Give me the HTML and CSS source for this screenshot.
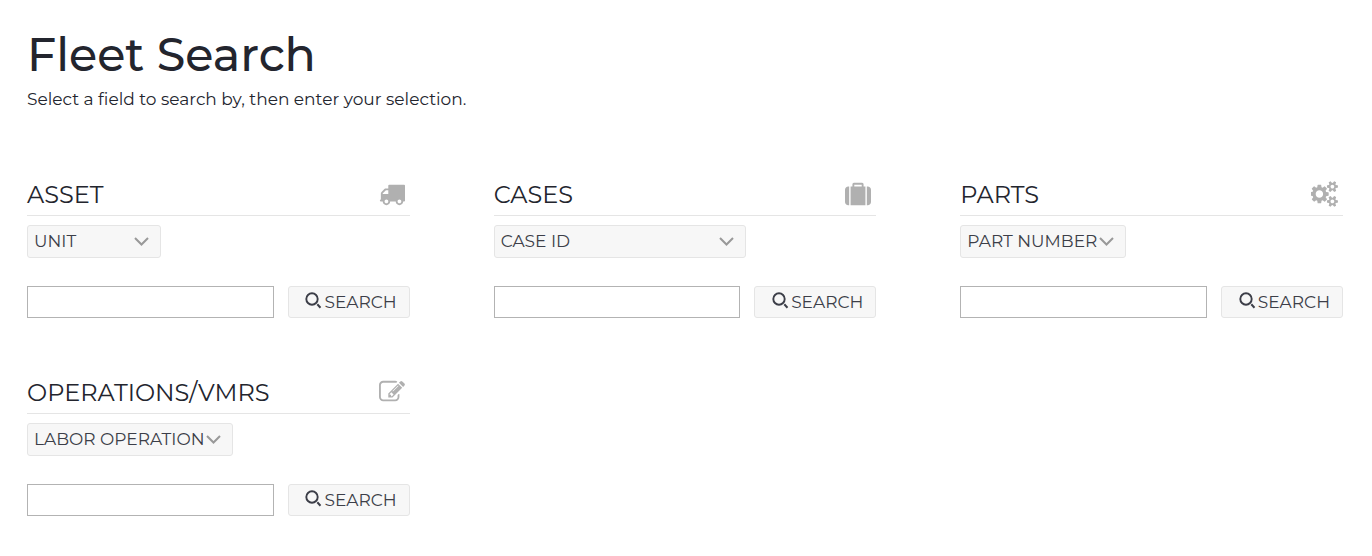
FILE: index.html
```
<!DOCTYPE html>
<html lang="en">
<head>
    <meta charset="UTF-8">
    <meta name="viewport" content="width=device-width, initial-scale=1.0">
    <title>Fleet Search</title>
    <link rel="stylesheet" href="styles.css">
</head>
<body>
    <!-- shared icons -->
    <svg class="sprite" aria-hidden="true">
        <symbol id="icon-search" viewBox="0 0 18 22">
            <circle cx="8" cy="8" r="5.700" fill="none" stroke="currentColor" stroke-width="1.900"/>
            <path d="M13.300 13.300l3.200 3.400" fill="none" stroke="currentColor" stroke-width="2"/>
        </symbol>
        <symbol id="small-cog" viewBox="1088 1024 768 768">
            <path d="M1600 1408q0-52-38-90t-90-38-90 38-38 90q0 53 37.500 90.500t90.500 37.500 90.500-37.500 37.500-90.500zm256-70v140q0 16-149 31-12 27-30 52 51 113 51 138 0 4-4 7-122 71-124 71-8 0-46-47t-52-68q-20 2-30 2t-30-2q-14 21-52 68t-46 47q-2 0-124-71-4-3-4-7 0-25 51-138-18-25-30-52-149-15-149-31v-140q0-16 149-31 13-29 30-52-51-113-51-138 0-4 4-7 4-2 35-20t59-34 30-16q8 0 46 46.500t52 67.500q20-2 30-2t30 2q51-71 92-112l6-2q4 0 124 70 4 3 4 7 0 25-51 138 17 23 30 52 149 15 149 31z"/>
        </symbol>
    </svg>

    <main class="page">
        <header class="page-header">
            <h1>Fleet Search</h1>
            <p>Select a field to search by, then enter your selection.</p>
        </header>

        <div class="search-grid">
            <form class="search-box">
                <div class="box-title">
                    <h2 id="asset-title">ASSET</h2>
                    <svg class="box-icon" viewBox="0 0 1792 1792" aria-hidden="true"><path d="M640 1408q0-52-38-90t-90-38-90 38-38 90 38 90 90 38 90-38 38-90zm-384-512h384v-256h-158q-13 0-22 9l-195 195q-9 9-9 22v30zm1280 512q0-52-38-90t-90-38-90 38-38 90 38 90 90 38 90-38 38-90zm256-1088v1024q0 15-4 26.500t-13.500 18.500-16.500 11.500-23.500 6-22.500 2-25.500 0-22.500-.5q0 106-75 181t-181 75-181-75-75-181h-384q0 106-75 181t-181 75-181-75-75-181h-64q-3 0-22.500.5t-25.500 0-22.500-2-23.500-6-16.500-11.500-13.500-18.500-4-26.500q0-26 19-45t45-19v-320q0-8-.5-35t0-38 2.500-34.500 6.500-37 14-30.500 22.500-30l198-198q19-19 50.500-32t58.500-13h160v-192q0-26 19-45t45-19h1024q26 0 45 19t19 45z"/></svg>
                </div>
                <select class="field-select field-unit" name="assetField" aria-labelledby="asset-title">
                    <option>UNIT</option>
                </select>
                <div class="search-row">
                    <input type="text" name="asset" aria-labelledby="asset-title">
                    <button type="submit"><svg class="search-icon" aria-hidden="true"><use href="#icon-search"/></svg>SEARCH</button>
                </div>
            </form>

            <form class="search-box">
                <div class="box-title">
                    <h2 id="cases-title">CASES</h2>
                    <svg class="box-icon" viewBox="0 0 1792 1792" aria-hidden="true"><path d="M640 384h512v-128h-512v128zm-352 0v1280h-64q-92 0-158-66t-66-158v-832q0-92 66-158t158-66h64zm1120 0v1280h-1024v-1280h128v-160q0-40 28-68t68-28h576q40 0 68 28t28 68v160h128zm384 224v832q0 92-66 158t-158 66h-64v-1280h64q92 0 158 66t66 158z"/></svg>
                </div>
                <select class="field-select field-case" name="caseField" aria-labelledby="cases-title">
                    <option>CASE ID</option>
                </select>
                <div class="search-row">
                    <input type="text" name="case" aria-labelledby="cases-title">
                    <button type="submit"><svg class="search-icon" aria-hidden="true"><use href="#icon-search"/></svg>SEARCH</button>
                </div>
            </form>

            <form class="search-box">
                <div class="box-title">
                    <h2 id="parts-title">PARTS</h2>
                    <svg class="box-icon box-icon-wide" viewBox="0 0 1856 1792" aria-hidden="true">
                        <path d="M832 896q0-106-75-181t-181-75-181 75-75 181 75 181 181 75 181-75 75-181zm384-91v185q0 10-7 19.500t-16 10.500l-155 24q-11 35-32 76 34 48 90 115 7 11 7 20 0 12-7 19-23 30-82.500 89.500t-78.500 59.500q-11 0-21-7l-115-90q-37 19-77 31-11 108-23 155-7 24-30 24h-186q-11 0-20-7.500t-10-17.500l-23-153q-34-10-75-31l-118 89q-7 7-20 7-11 0-21-8-144-133-144-160 0-9 7-19 10-14 41-53t47-61q-23-44-35-82l-152-24q-10-1-17-9.500t-7-19.500v-185q0-10 7-19.500t16-10.500l155-24q11-35 32-76-34-48-90-115-7-11-7-20 0-12 7-20 22-30 82-89t79-59q11 0 21 7l115 90q34-18 77-32 11-108 23-154 7-24 30-24h186q11 0 20 7.500t10 17.500l23 153q34 10 75 31l118-89q8-7 20-7 11 0 21 8 144 133 144 160 0 8-7 19-12 16-42 54t-45 60q23 48 34 82l152 23q10 2 17 10.500t7 19.500z"/>
                        <use href="#small-cog" x="1088" y="0" width="768" height="768"/>
                        <use href="#small-cog" x="1088" y="1024" width="768" height="768"/>
                    </svg>
                </div>
                <select class="field-select field-part" name="partField" aria-labelledby="parts-title">
                    <option>PART NUMBER</option>
                </select>
                <div class="search-row">
                    <input type="text" name="part" aria-labelledby="parts-title">
                    <button type="submit"><svg class="search-icon" aria-hidden="true"><use href="#icon-search"/></svg>SEARCH</button>
                </div>
            </form>

            <form class="search-box">
                <div class="box-title">
                    <h2 id="operations-title">OPERATIONS/VMRS</h2>
                    <svg class="box-icon" viewBox="0 0 1792 1792" aria-hidden="true"><path d="M888 1184l116-116-152-152-116 116v56h96v96h56zm440-720q-16-16-33 1l-350 350q-17 17-1 33t33-1l350-350q17-17 1-33zm80 594v190q0 119-84.500 203.500t-203.500 84.500h-832q-119 0-203.500-84.500t-84.500-203.500v-832q0-119 84.500-203.500t203.500-84.500h832q63 0 117 25 15 7 18 23 3 17-9 29l-49 49q-14 14-32 8-23-6-45-6h-832q-66 0-113 47t-47 113v832q0 66 47 113t113 47h832q66 0 113-47t47-113v-126q0-13 9-22l64-64q15-15 35-7t20 29zm-96-738l288 288-672 672h-288v-288zm444 132l-92 92-288-288 92-92q28-28 68-28t68 28l152 152q28 28 28 68t-28 68z"/></svg>
                </div>
                <select class="field-select field-labor" name="operationField" aria-labelledby="operations-title">
                    <option>LABOR OPERATION</option>
                </select>
                <div class="search-row">
                    <input type="text" name="operation" aria-labelledby="operations-title">
                    <button type="submit"><svg class="search-icon" aria-hidden="true"><use href="#icon-search"/></svg>SEARCH</button>
                </div>
            </form>
        </div>
    </main>
</body>
</html>
```
FILE: styles.css
```
* {box-sizing: border-box;}
body {margin: 0; background: #fff; color: #23252e; font-family: Montserrat, Inter, "Open Sans", sans-serif; font-size: 17px;}
h1, h2, p {margin: 0;}
.sprite {display: none;}

.page {padding: 25px 29px 40px 27px;}
.page-header {margin-bottom: 68px;}
.page-header h1 {font-size: 46px; line-height: 60px; font-weight: 500;}
.page-header p {line-height: 28px;}

/* three boxes per row on desktop */
.search-grid {display: grid; grid-template-columns: repeat(3, minmax(0, 1fr)); gap: 61px 84px;}
.box-title {display: flex; justify-content: space-between; align-items: flex-start; height: 35px; padding-right: 5px; border-bottom: 1px solid #e5e5e5;}
.box-title h2 {font-size: 24px; line-height: 27px; font-weight: 400;}
.box-icon {width: 26px; height: 26px; fill: #b0b0b0;}
.box-icon-wide {width: 27px;}

.field-select {
    display: block; height: 33px; margin: 9px 0 28px; padding: 0 24px 2px 6px;
    border: 1px solid #e5e5e5; border-radius: 3px; appearance: none;
    background: #f7f7f7 url("data:image/svg+xml,%3Csvg xmlns='http://www.w3.org/2000/svg' width='15' height='9'%3E%3Cpath d='M1 1l6.500 6.500L14 1' fill='none' stroke='%23999' stroke-width='2'/%3E%3C/svg%3E") no-repeat right 11px center;
    color: #3c3e48; font-family: inherit; font-size: 17px;
}
.field-unit {width: 134px;}
.field-case {width: 252px;}
.field-part {width: 166px;}
.field-labor {width: 206px;}

.search-row {display: flex; gap: 14px;}
.search-row input {flex: 1; min-width: 0; height: 32px; padding: 0 8px; border: 1px solid #b3b3b3; font: inherit;}
.search-row button {
    display: flex; justify-content: flex-end; align-items: center; gap: 2px; width: 122px; height: 32px; padding: 0 12px;
    border: 1px solid #e5e5e5; border-radius: 3px; background: #f7f7f7; color: #3c3e48; font-family: inherit; font-size: 17px;
}
.search-icon {width: 18px; height: 22px;}

@media (max-width: 1100px) {
    .search-grid {grid-template-columns: repeat(auto-fit, minmax(300px, 1fr));}
}
```
